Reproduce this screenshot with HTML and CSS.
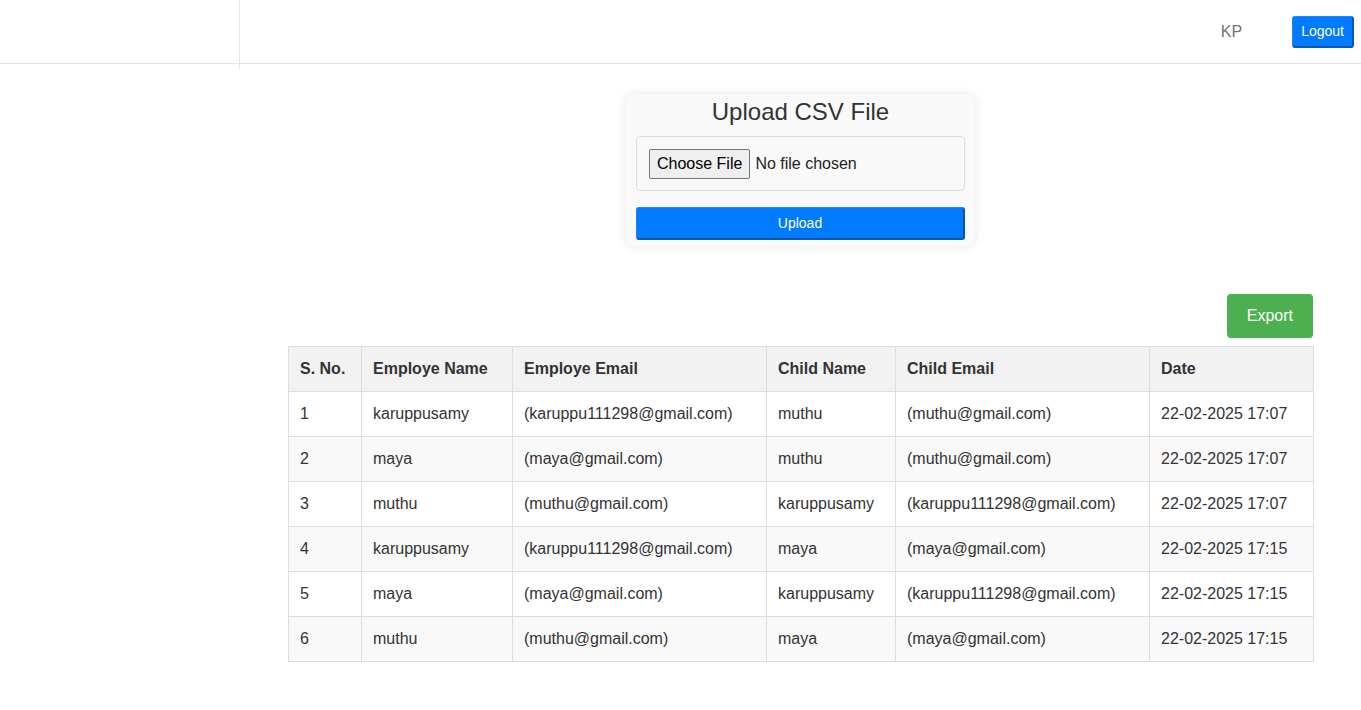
FILE: index.html
```html
<!DOCTYPE html>
<html lang="en">
<head>
<meta charset="utf-8">
<title>Upload CSV</title>
<link rel="stylesheet" href="styles.css">
</head>
<body>
<div class="sidebar"></div>
<header class="topbar">
  <span class="user">KP</span>
  <button class="btn-blue logout" type="button">Logout</button>
</header>
<main class="main">
  <section class="card">
    <h2 class="card-title">Upload CSV File</h2>
    <div class="file-box"><input class="file-input" type="file" accept=".csv"></div>
    <button class="btn-blue upload" type="button">Upload</button>
  </section>
  <div class="actions">
    <button class="export" type="button">Export</button>
  </div>
  <table class="data">
    <colgroup>
      <col class="c1"><col class="c2"><col class="c3"><col class="c4"><col class="c5"><col class="c6">
    </colgroup>
    <thead>
      <tr><th>S. No.</th><th>Employe Name</th><th>Employe Email</th><th>Child Name</th><th>Child Email</th><th>Date</th></tr>
    </thead>
    <tbody>
      <tr><td>1</td><td>karuppusamy</td><td>(karuppu111298@gmail.com)</td><td>muthu</td><td>(muthu@gmail.com)</td><td>22-02-2025 17:07</td></tr>
      <tr><td>2</td><td>maya</td><td>(maya@gmail.com)</td><td>muthu</td><td>(muthu@gmail.com)</td><td>22-02-2025 17:07</td></tr>
      <tr><td>3</td><td>muthu</td><td>(muthu@gmail.com)</td><td>karuppusamy</td><td>(karuppu111298@gmail.com)</td><td>22-02-2025 17:07</td></tr>
      <tr><td>4</td><td>karuppusamy</td><td>(karuppu111298@gmail.com)</td><td>maya</td><td>(maya@gmail.com)</td><td>22-02-2025 17:15</td></tr>
      <tr><td>5</td><td>maya</td><td>(maya@gmail.com)</td><td>karuppusamy</td><td>(karuppu111298@gmail.com)</td><td>22-02-2025 17:15</td></tr>
      <tr><td>6</td><td>muthu</td><td>(muthu@gmail.com)</td><td>maya</td><td>(maya@gmail.com)</td><td>22-02-2025 17:15</td></tr>
    </tbody>
  </table>
</main>
</body>
</html>
```

FILE: styles.css
```css
* { box-sizing: border-box; }
html, body { margin: 0; padding: 0; background: #fff; }
body {
  font-family: "Liberation Sans", Arial, sans-serif;
  color: #333;
  font-size: 16px;
}
.sidebar {
  position: absolute;
  left: 0;
  top: 0;
  width: 240px;
  height: 69px;
  border-right: 1px solid #e5e5e5;
  pointer-events: none;
}
.topbar {
  height: 64px;
  border-bottom: 1px solid #e5e5e5;
  display: flex;
  align-items: center;
  justify-content: flex-end;
  gap: 50px;
  padding: 0 7px 0 0;
}
.user {
  color: #6c757d;
  font-size: 16px;
}
.btn-blue {
  background: #007bff;
  color: #fff;
  font-family: "Liberation Sans", Arial, sans-serif;
  font-size: 14px;
  border: 1px solid #1a86ff;
  border-right: 2px solid #0657ad;
  border-bottom: 2px solid #0657ad;
  border-radius: 3px;
  cursor: pointer;
}
.logout {
  height: 32px;
  padding: 0 8px;
}
.main {
  padding: 30px 48px 40px 288px;
}
.card {
  width: 349px;
  margin: 0 auto;
  background: #f9f9f9;
  border-radius: 8px;
  box-shadow: 0 0 10px rgba(0, 0, 0, 0.1);
  padding: 4px 10px 7px;
}
.card-title {
  margin: 0 0 10px;
  font-size: 24px;
  font-weight: normal;
  text-align: center;
  color: #333;
}
.file-box {
  border: 1px solid #ddd;
  border-radius: 4px;
  padding: 12px 12px 11px;
  background: #f9f9f9;
}
.file-input {
  display: block;
  font-family: "Liberation Sans", Arial, sans-serif;
  font-size: 16px;
  color: #222;
}
.file-input::file-selector-button {
  font-family: "Liberation Sans", Arial, sans-serif;
  font-size: 16px;
  color: #000;
  background: #efefef;
  border: 1px solid #767676;
  border-radius: 2px;
  padding: 5px 7px;
  margin-right: 5px;
}
.upload {
  display: block;
  width: 100%;
  height: 33px;
  margin-top: 16px;
  padding: 0;
}
.actions {
  display: flex;
  justify-content: flex-end;
  margin-top: 47px;
}
.export {
  background: #4caf50;
  color: #fff;
  border: none;
  border-radius: 4px;
  font-family: "Liberation Sans", Arial, sans-serif;
  font-size: 16px;
  line-height: 18px;
  padding: 13px 20px;
  cursor: pointer;
}
.data {
  width: 100%;
  margin-top: 8px;
  border-collapse: collapse;
  table-layout: fixed;
}
.c1 { width: 73px; }
.c2 { width: 151px; }
.c3 { width: 254px; }
.c4 { width: 129px; }
.c5 { width: 254px; }
.c6 { width: 164px; }
.data th, .data td {
  border: 1px solid #ddd;
  padding: 12px 10px 12px 11px;
  line-height: 20px;
  text-align: left;
  white-space: nowrap;
  font-size: 16px;
}
.data th:first-child, .data td:first-child {
  padding-left: 11px;
}
.data th {
  background: #f2f2f2;
  font-weight: bold;
}
.data tbody tr:nth-child(even) td {
  background: #f9f9f9;
}
```
